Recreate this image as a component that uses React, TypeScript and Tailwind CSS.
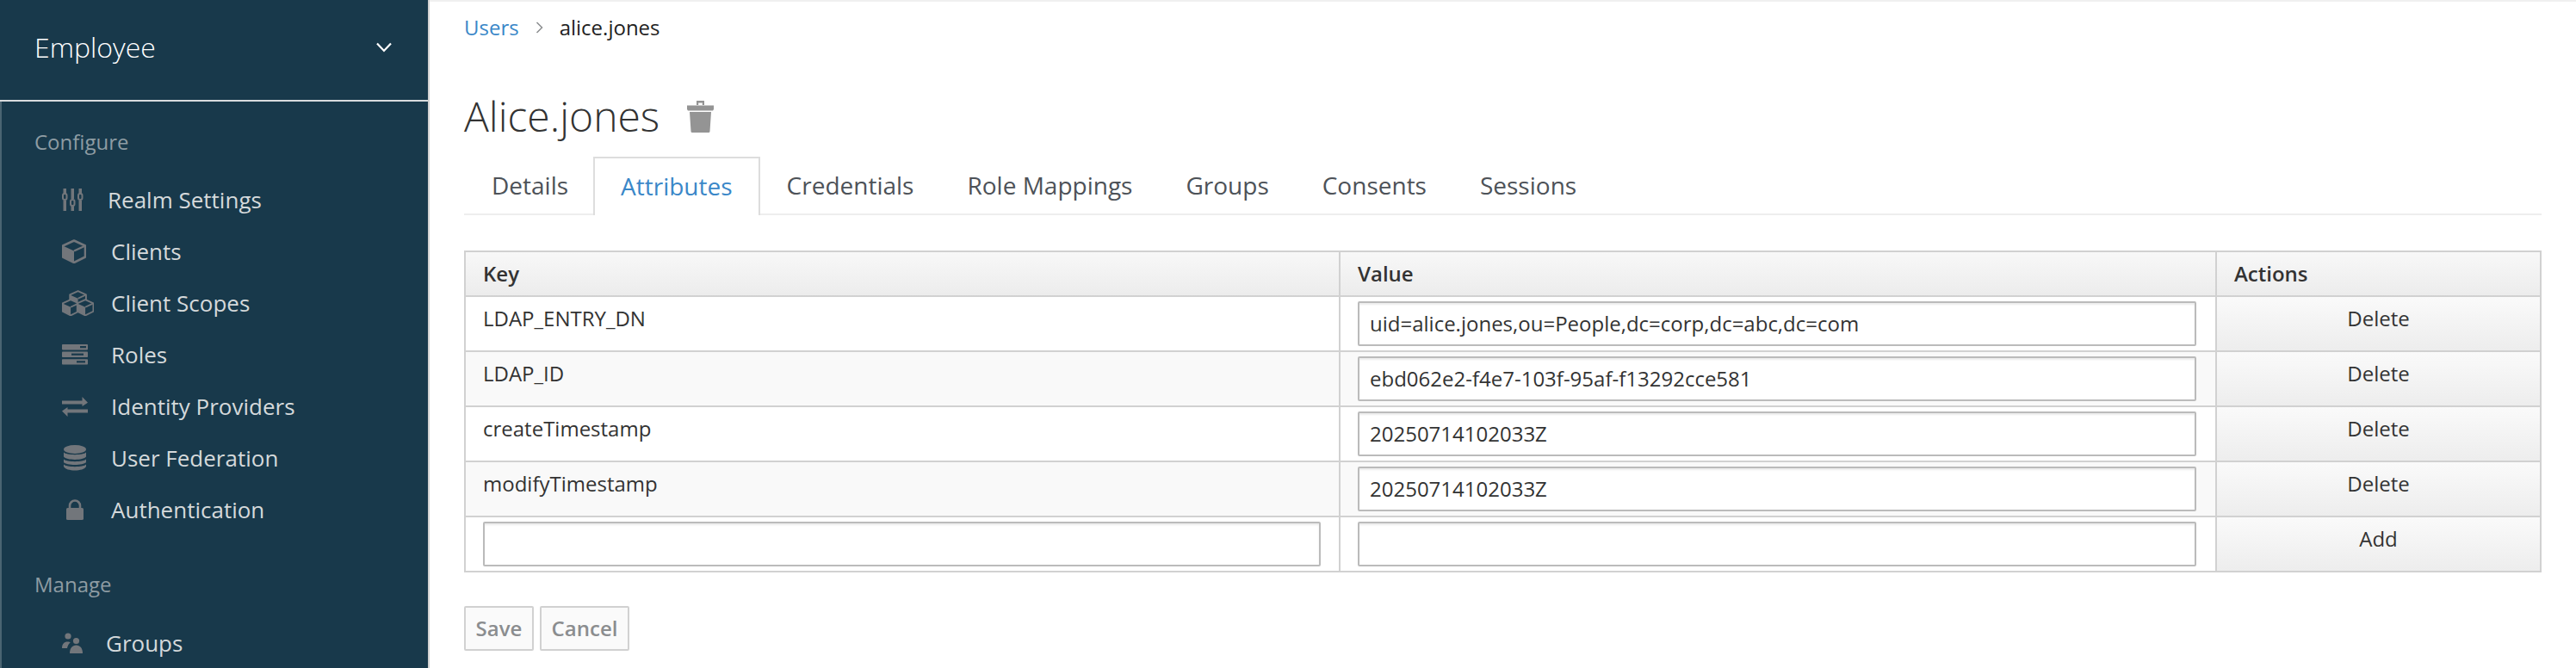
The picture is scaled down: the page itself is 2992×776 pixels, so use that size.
import React from "react";

const G = "#72767b";

function Sliders() {
  return (
    <svg width="27" height="26" viewBox="1.5 0 27 26" fill={G}>
      <rect x="3" y="0" width="3.5" height="6" /><rect x="3" y="14" width="3.5" height="12" />
      <rect x="12" y="0" width="3.5" height="12" /><rect x="12" y="20" width="3.5" height="6" />
      <rect x="21" y="0" width="3.5" height="6" /><rect x="21" y="14" width="3.5" height="12" />
      <rect x="2.5" y="6" width="4.5" height="7" rx="2" fill="none" stroke={G} strokeWidth="2" />
      <rect x="11.5" y="13" width="4.5" height="7" rx="2" fill="none" stroke={G} strokeWidth="2" />
      <rect x="20.5" y="6" width="4.5" height="7" rx="2" fill="none" stroke={G} strokeWidth="2" />
    </svg>
  );
}

function CubeShape({ x = 0, y = 0, s = 1 }: { x?: number; y?: number; s?: number }) {
  return (
    <g transform={`translate(${x} ${y}) scale(${s})`}>
      <path d="M14 1.5 27 7.5V20.5L14 27 1 20.5V7.5Z" fill="#18394b" stroke={G} strokeWidth="2.6" strokeLinejoin="round" />
      <path d="M1 7.5 14 13.5V27L1 20.5Z" fill={G} />
      <path d="M14 13.5 27 7.5" stroke={G} strokeWidth="2.4" />
    </g>
  );
}

function Cube() {
  return (
    <svg width="28" height="28" viewBox="0 0 28 28"><CubeShape /></svg>
  );
}

function Cubes() {
  return (
    <svg width="37" height="30" viewBox="0 0 37 30">
      <CubeShape x={8.5} y={0} s={0.72} />
      <CubeShape x={0} y={10} s={0.72} />
      <CubeShape x={17} y={10} s={0.72} />
    </svg>
  );
}

function Server() {
  return (
    <svg width="30" height="24" viewBox="0 0 30 24" fill={G}>
      <rect y="0" width="30" height="6.4" rx="0.8" />
      <rect y="8.6" width="30" height="6.4" rx="0.8" />
      <rect y="17.2" width="30" height="6.4" rx="0.8" />
      <rect x="21" y="2" width="7" height="2.2" fill="#18394b" />
      <rect x="11" y="10.6" width="14" height="2.2" fill="#18394b" />
      <rect x="17" y="19.2" width="10" height="2.2" fill="#18394b" />
    </svg>
  );
}

function Arrows() {
  return (
    <svg width="30" height="23" viewBox="0 0 30 23" fill={G}>
      <path d="M0 4.500H23.500V0L30 6.750 23.500 11V8.500H0Z" />
      <path d="M30 14.500H6.500V12L0 16.500 6.500 23V18.500H30Z" />
    </svg>
  );
}

function Database() {
  return (
    <svg width="26" height="30" viewBox="0 0 26 30" fill={G}>
      <ellipse cx="13" cy="5" rx="13" ry="5" />
      <path d="M0 8.500C3 12 23 12 26 8.500V13.500C23 18 3 18 0 13.500Z" />
      <path d="M0 16.500C3 20 23 20 26 16.500V20C23 24 3 24 0 20Z" />
      <path d="M0 22.500C3 26 23 26 26 22.500V25C23 31 3 31 0 25Z" />
    </svg>
  );
}

function Lock() {
  return (
    <svg width="20" height="24" viewBox="0 0 20 24" fill={G}>
      <path d="M4 10V7.500a6 6 0 0 1 12 0V10" fill="none" stroke={G} strokeWidth="2.6" />
      <rect x="0" y="10" width="20" height="14" rx="1.600" />
    </svg>
  );
}

function Users() {
  return (
    <svg width="24" height="24" viewBox="0 0 24 24" fill={G}>
      <circle cx="7" cy="4" r="3.600" />
      <circle cx="16.500" cy="9.500" r="3.600" />
      <path d="M0 18c0-5 2.500-7.500 6.500-7.500 1.500 0 2.500.3 3.300.8-1.800 1.600-3.300 3.800-3.800 6.700Z" />
      <path d="M9 24c0-6 3-9.500 7.500-9.500S24 18 24 24Z" />
    </svg>
  );
}

function Trash() {
  return (
    <svg width="31" height="37" viewBox="0 0 31 37" fill="#949494">
      <path d="M11 0h9v5h-2.200V2.500h-4.600V5H11Z" />
      <path d="M0 5.500h31v4.500l-1 1.500H1L0 10Z" />
      <path d="M3 13h25l-1.500 22.500a1.500 1.500 0 0 1-1.500 1.500H6a1.500 1.500 0 0 1-1.500-1.500Z" />
    </svg>
  );
}

const configure = [
  { label: "Realm Settings", icon: <Sliders />, slot: "w-[53px]" },
  { label: "Clients", icon: <Cube />, slot: "w-[57px]" },
  { label: "Client Scopes", icon: <Cubes />, slot: "w-[57px]" },
  { label: "Roles", icon: <Server />, slot: "w-[57px]" },
  { label: "Identity Providers", icon: <Arrows />, slot: "w-[57px]" },
  { label: "User Federation", icon: <span className="pl-[2px] flex"><Database /></span>, slot: "w-[57px]" },
  { label: "Authentication", icon: <span className="pl-[5px] flex"><Lock /></span>, slot: "w-[57px]" },
];

function NavItem({ label, icon, slot }: { label: string; icon: React.ReactNode; slot: string }) {
  return (
    <div className="flex items-center h-[60px] pl-[70px]">
      <div className={`${slot} shrink-0 flex items-center`}>{icon}</div>
      <span className="text-[26px] text-[#d5d9db]">{label}</span>
    </div>
  );
}

const rows = [
  { k: "LDAP_ENTRY_DN", v: "uid=alice.jones,ou=People,dc=corp,dc=abc,dc=com", bg: "bg-white" },
  { k: "LDAP_ID", v: "ebd062e2-f4e7-103f-95af-f13292cce581", bg: "bg-[#f9f9f9]" },
  { k: "createTimestamp", v: "20250714102033Z", bg: "bg-white" },
  { k: "modifyTimestamp", v: "20250714102033Z", bg: "bg-[#f9f9f9]" },
];

const tabs = ["Details", "Attributes", "Credentials", "Role Mappings", "Groups", "Consents", "Sessions"];

function Field({ value, width }: { value: string; width: string }) {
  return (
    <div className={`${width} h-[52px] bg-white border-2 border-[#bbbbbb] rounded-[2px] shadow-[inset_0_2px_2px_rgba(0,0,0,0.08)] flex items-center px-[12px] text-[24px] text-[#333333] whitespace-nowrap`}>
      {value}
    </div>
  );
}

function ActionCell({ text }: { text: string }) {
  return (
    <td className="border-2 border-[#d1d1d1] p-0 align-top h-[64px] bg-gradient-to-b from-[#fafafa] to-[#ededed] text-center">
      <div className="text-[24px] text-[#333333] leading-[50px]">{text}</div>
    </td>
  );
}

export default function App() {
  return (
    <div className="flex h-[776px] w-[2992px] overflow-hidden bg-white font-['Open_Sans',sans-serif] text-[#333333]">
      <aside className="w-[499px] shrink-0 h-full bg-[#18394b] border-r-2 border-[#d1d1d1]">
        <div className="h-[118px] border-b-2 border-[#d8dcde] flex items-center justify-between pl-[40px] pr-[42px] pb-[6px] text-white">
          <span className="text-[32px] font-light">Employee</span>
          <svg width="18" height="12" viewBox="0 0 18 12" fill="none" stroke="white" strokeWidth="2.200"><path d="M1 1.500 9 10l8-8.500" /></svg>
        </div>
        <div className="border-l-2 border-[#4a6472] h-full">
          <div className="pl-[38px] pt-[30px] h-[34px] box-content text-[24px] leading-[34px] text-[#8e9ca3]">Configure</div>
          <div className="mt-[20px]">
            {configure.map((i) => <NavItem key={i.label} {...i} />)}
          </div>
          <div className="pl-[38px] mt-[40px] h-[34px] text-[24px] leading-[34px] text-[#8e9ca3]">Manage</div>
          <div className="mt-[21px]">
            <NavItem label="Groups" icon={<Users />} slot="w-[51px]" />
          </div>
        </div>
      </aside>

      <main className="flex-1 min-w-0 border-t-2 border-[#f0f0f0] pl-[40px] pr-[40px]">
        <div className="flex items-center h-[60px] text-[24px]">
          <span className="text-[#3a87c8]">Users</span>
          <svg className="mx-[19px]" width="9" height="14" viewBox="0 0 9 14" fill="none" stroke="#8b8d8f" strokeWidth="1.500"><path d="M1.500 1 7.500 7l-6 6" /></svg>
          <span className="text-[#222222]">alice.jones</span>
        </div>
        <div className="flex items-center mt-[42px] h-[62px]">
          <h1 className="text-[48px] font-light text-[#333333] leading-[62px]">Alice.jones</h1>
          <span className="ml-[32px] flex"><Trash /></span>
        </div>
        <div className="flex h-[68px] mt-[16px] border-b-2 border-[#eeeeee] text-[28px] text-[#4d5258]">
          {tabs.map((t) => (
            <div
              key={t}
              className={
                t === "Attributes"
                  ? "h-[68px] px-[30px] pb-[2px] border-2 border-b-0 border-[#dddddd] bg-white text-[#3a87c8] flex items-center"
                  : "h-[66px] px-[31px] first:pl-[32px] first:pr-[29px] flex items-center"
              }
            >
              {t}
            </div>
          ))}
        </div>

        <table className="mt-[41px] w-[2411px] table-fixed border-collapse text-[24px]">
          <colgroup>
            <col className="w-[1016px]" />
            <col className="w-[1018px]" />
            <col className="w-[377px]" />
          </colgroup>
          <thead>
            <tr className="h-[52px] bg-gradient-to-b from-[#f8f8f8] to-[#ececec] text-left">
              <th className="border-2 border-[#d1d1d1] px-[20px] font-semibold">Key</th>
              <th className="border-2 border-[#d1d1d1] px-[20px] font-semibold">Value</th>
              <th className="border-2 border-[#d1d1d1] px-[20px] font-semibold">Actions</th>
            </tr>
          </thead>
          <tbody>
            {rows.map((r) => (
              <tr key={r.k} className={`h-[64px] ${r.bg}`}>
                <td className="border-2 border-[#d1d1d1] px-[20px] align-top leading-[50px]">{r.k}</td>
                <td className="border-2 border-[#d1d1d1] px-[20px] align-middle"><Field value={r.v} width="w-[974px]" /></td>
                <ActionCell text="Delete" />
              </tr>
            ))}
            <tr className="h-[64px] bg-white">
              <td className="border-2 border-[#d1d1d1] px-[20px] align-middle"><Field value="" width="w-[973px]" /></td>
              <td className="border-2 border-[#d1d1d1] px-[20px] align-middle"><Field value="" width="w-[974px]" /></td>
              <ActionCell text="Add" />
            </tr>
          </tbody>
        </table>

        <div className="flex gap-[7px] mt-[39px]">
          <div className="h-[52px] w-[81px] bg-[#fafafa] border-2 border-[#d1d1d1] rounded-[2px] flex items-center justify-center text-[24px] font-semibold text-[#8b8d8f]">Save</div>
          <div className="h-[52px] w-[104px] bg-[#fafafa] border-2 border-[#d1d1d1] rounded-[2px] flex items-center justify-center text-[24px] font-semibold text-[#8b8d8f]">Cancel</div>
        </div>
      </main>
    </div>
  );
}
